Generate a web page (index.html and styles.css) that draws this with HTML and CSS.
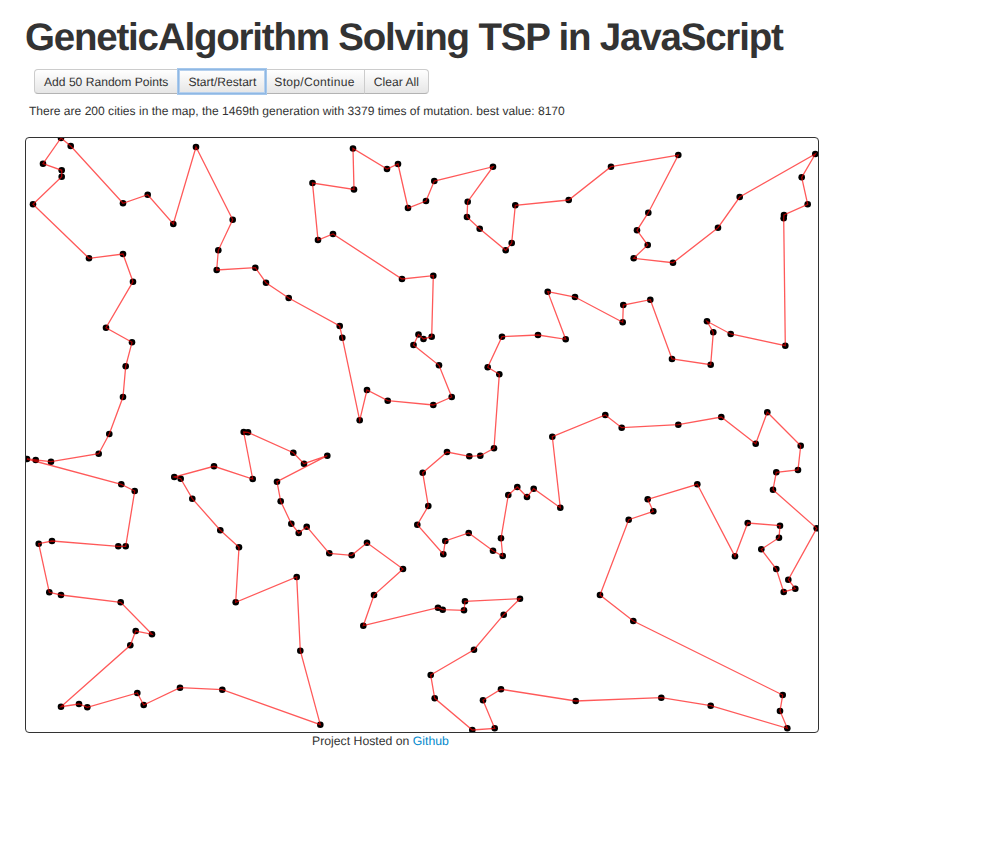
FILE: index.html
```html
<!DOCTYPE html>
<html>
    <head>
        <meta charset="utf-8">
        <title>GeneticAlgorithm Solving TSP in JavaScript</title>
        <link rel="stylesheet" href="styles.css">
    </head>
    <body>
        <div id="page">
            <h1 id="title">GeneticAlgorithm Solving TSP in JavaScript</h1>
            <div id="controls">
                <button class="btn">Add 50 Random Points</button>
                <button class="btn btn-focus">Start/Restart</button>
                <button class="btn btn-stop">Stop/Continue</button>
                <button class="btn">Clear All</button>
            </div>
            <p id="status">There are 200 cities in the map, the 1469th generation with 3379 times of mutation. best value: 8170</p>
            <canvas id="map" width="792" height="594"></canvas>
            <p id="footer">Project Hosted on <a href="#">Github</a></p>
        </div>
        <script src="main.js"></script>
    </body>
</html>
```

FILE: styles.css
```css
html, body {
    margin: 0;
    padding: 0;
    background: #fff;
}

#page {
    width: 794px;
    padding: 18px 0 0 25px;
    font-family: "Liberation Sans", Arial, sans-serif;
    color: #333;
    text-rendering: geometricPrecision;
}

#title {
    margin: 0;
    font-size: 38.5px;
    line-height: 40px;
    font-weight: bold;
    letter-spacing: -1.2px;
    color: #333;
    white-space: nowrap;
}

#controls {
    display: flex;
    margin: 11px 0 0 9px;
}

.btn {
    height: 25px;
    margin: 0 0 0 -1px;
    padding: 0 9px;
    font-family: inherit;
    font-size: 12.1px;
    color: #333;
    text-rendering: geometricPrecision;
    background: linear-gradient(#fff, #e6e6e6);
    border: 1px solid #ccc;
    border-bottom-color: #b3b3b3;
}

.btn:first-child {
    margin-left: 0;
    border-radius: 4px 0 0 4px;
}

.btn:last-child {
    border-radius: 0 4px 4px 0;
}

.btn-focus {
    position: relative;
    margin-left: 0;
    border-color: #8fb8e4;
    box-shadow: 0 0 0 1px #a6c8ec, inset 0 0 0 1px #b5d0ee;
    z-index: 1;
}

.btn-stop {
    margin-left: -2px;
    letter-spacing: 0.3px;
}

#status {
    margin: 9px 0 0 4px;
    font-size: 12.07px;
    line-height: 16px;
    color: #333;
}

#map {
    display: block;
    margin-top: 18px;
    background: #fff;
    border: 1px solid #333;
    border-radius: 4px;
}

#footer {
    margin: 0 0 0 287px;
    font-size: 12.25px;
    line-height: 16px;
    color: #333;
}

#footer a {
    color: #08c;
    text-decoration: none;
}
```

FILE: main.js
```js
// best tour, in page coordinates
const tour = [
    [61,138],[70.7,146],[123,203.3],[147.7,194.7],[173.3,224],[196,147],[232.7,219.7],[218.3,250.3],
    [216.7,270],[255.3,267.7],[266,282.7],[288.7,298],[339.7,326],[342.3,337.7],[359.7,420.3],[367,390],
    [387.7,400.7],[433.3,405],[451.7,397],[439,365.3],[413.5,345],[418.5,334.5],[423.5,339],[431.7,336.7],
    [433.3,275.7],[402,279],[333,234],[318,240],[312.5,183],[354,189.5],[353,148.5],[387,169],
    [398,164],[408,208],[426,201],[434.3,181],[493,166.7],[467.7,201.7],[467,217],[479.7,228.7],
    [505.7,250.3],[511.7,243],[515.3,205.3],[568.7,200],[611,166.7],[678.3,155],[648.3,212.7],[637,230.3],
    [647.7,245],[633.7,258.3],[673,262.7],[718,227.7],[739.7,197],[815.3,154],[801.7,177.3],[807.7,204.3],
    [784,215],[783.7,218.3],[785.3,345.7],[730.7,334],[707,321.3],[713.3,332.3],[710.7,364.7],[672,359],
    [650.3,299.7],[623.3,305],[622.7,322.3],[575,297],[547.7,291.7],[565.7,339.3],[538,335],[502,336.7],
    [487.7,367.3],[499.3,374.3],[494,448.3],[480.3,455.7],[469.3,456.3],[447,452],[422.7,472.7],[428.3,506],
    [417.3,524.7],[443.3,554.3],[445.3,541],[468.7,533],[493,550.7],[502.7,556],[501,538.3],[508.3,495],
    [517.3,487],[527,497],[533.7,488.7],[560.3,507.7],[552.3,436.7],[605.3,415],[621.7,427.7],[678.3,424.7],
    [721.3,417],[755.7,443.7],[767.3,412.3],[800.7,445.7],[798,470],[776.3,472.3],[773,489.7],[816.7,528.3],
    [788.3,579.7],[795.3,588.7],[783.7,592],[776.3,569],[761.3,549.3],[779,537.7],[780,525.7],[747.7,523],
    [735,556.3],[697.3,484.3],[647.7,499.3],[653.3,511.3],[628.7,519.7],[600,595],[633.3,621],[782.7,695],
    [780,711],[787.3,728.3],[710.7,705.7],[661.3,697.7],[575.7,701],[501,689.3],[483,700.3],[494.7,728.3],
    [472.3,730],[434.7,698.3],[430.7,675],[474,649.7],[503.7,614.7],[520,598.7],[465,601.3],[464,610.3],
    [442.7,609.7],[438,607.7],[363.3,625.7],[374,595],[403,569],[367,542.7],[351.7,555.3],[329.3,553.3],
    [306.7,526.7],[298.7,533],[291.3,523.7],[280.7,501.3],[277,481.7],[327.3,455.7],[304,463.7],[293.3,452.7],
    [248,432.3],[243.7,432],[252.7,479],[214,466.3],[174.3,477],[180.7,478.7],[192.3,498.7],[220.3,530.3],
    [239,547.3],[235.7,602.3],[296.7,577],[300.3,650.7],[320.3,724.7],[222.3,689.7],[180,687.7],[143.7,705],
    [137.3,693],[87.3,707.3],[79,704],[61,706.7],[130.3,645.3],[135.7,631],[152,634.3],[120.7,602.3],
    [61,595],[49.3,592.3],[38.7,543.7],[52,541],[118.3,546.3],[125.7,546.3],[134.7,491],[121.3,484.3],
    [27,459],[35.7,460],[51,461.7],[98.7,453.7],[109.3,434],[123,397],[125.7,366.3],[132,342.3],
    [106,327.7],[133,281.7],[123,254],[89,258.3],[33,204.3],[61.7,176.7],[61.7,170.3],[43,163.7]
];

function drawMap() {
    const ctx = document.getElementById('map').getContext('2d');
    ctx.translate(-26, -138);

    ctx.fillStyle = '#000';
    for (const [x, y] of tour) {
        ctx.beginPath();
        ctx.arc(x, y, 3.3, 0, Math.PI * 2);
        ctx.fill();
    }

    ctx.strokeStyle = 'rgba(255, 0, 0, 0.65)';
    ctx.lineWidth = 1.3;
    ctx.beginPath();
    tour.forEach(([x, y], i) => i ? ctx.lineTo(x, y) : ctx.moveTo(x, y));
    ctx.closePath();
    ctx.stroke();
}

drawMap();
```
